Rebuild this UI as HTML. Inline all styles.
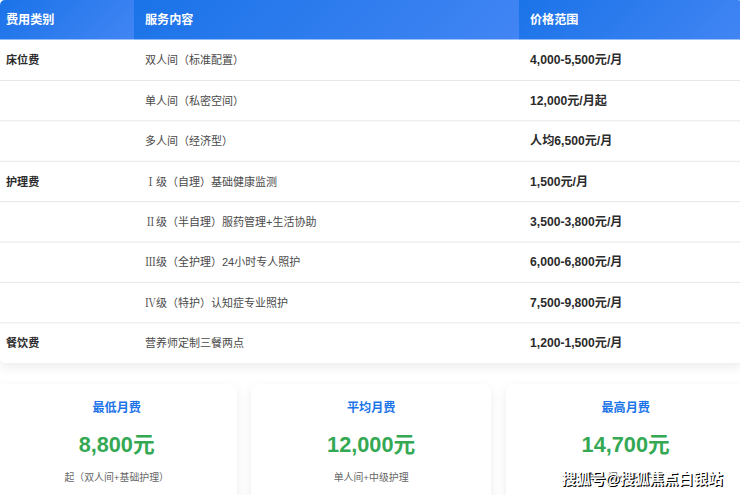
<!DOCTYPE html>
<html lang="zh-CN">
<head>
<meta charset="utf-8">
<title>费用明细</title>
<style>
html,body{margin:0;padding:0;}
body{width:740px;height:495px;overflow:hidden;position:relative;background:#fff;
 font-family:"Liberation Sans","Noto Sans CJK SC",sans-serif;color:#2b2b2b;}
.tbl{position:absolute;left:0;top:0;width:742.5px;height:363.2px;background:#fff;border-radius:5px;
 box-shadow:0 4px 12px rgba(0,0,0,.08);overflow:hidden;}
.th{position:absolute;top:0;height:40px;color:#fff;font-weight:bold;font-size:12.1px;
 background:linear-gradient(135deg,#1a73e8,#4285f4);box-sizing:border-box;white-space:nowrap;}
.th span{position:absolute;left:6px;top:1.2px;line-height:39.7px;}
.c1{left:0;width:134px;}
.c2{left:134px;width:385px;}
.c3{left:519px;width:223px;}
.th.c2 span,.th.c3 span{left:11px;}
svg.lines{position:absolute;left:0;top:0;width:742px;height:364px;}
.row{position:absolute;left:0;width:740px;height:40.4px;}
.row div{position:absolute;top:0;height:40.4px;line-height:40.4px;white-space:nowrap;}
.row .a{left:6px;font-weight:bold;font-size:11.1px;color:#2b2b2b;}
.row .b{left:145px;color:#4a4a4a;font-size:11px;}
.row .c{left:530px;font-weight:bold;font-size:12.15px;color:#2b2b2b;}
.rn{font-family:"Liberation Serif","Noto Serif CJK SC",serif;}
.card{position:absolute;top:383.5px;width:239.9px;height:130px;background:#fff;border-radius:8px;
 box-shadow:0 4px 12px rgba(0,0,0,.08);text-align:center;}
.card .t{position:absolute;left:0;right:0;top:16.5px;font-size:12.1px;font-weight:bold;color:#1a73e8;line-height:16px;}
.card .p{position:absolute;left:0;right:0;top:47px;font-size:21.7px;font-weight:bold;color:#34a853;line-height:28px;}
.card .s{position:absolute;left:0;right:0;top:87.3px;font-size:9.9px;color:#666;line-height:14px;}
.wm{position:absolute;left:561.4px;top:468.7px;font-size:14.7px;line-height:20px;color:#fff;white-space:nowrap;
 text-shadow:1px 1px 0 #000,1px 1px 0.6px rgba(0,0,0,.6);font-weight:bold;}
</style>
</head>
<body>
<div class="tbl">
<div class="th c1"><span>费用类别</span></div>
<div class="th c2"><span>服务内容</span></div>
<div class="th c3"><span>价格范围</span></div>
<svg class="lines" viewBox="0 0 742 364"><rect x="0" y="39.5" width="742" height="0.6" fill="#fff"/><rect x="0" y="79.95" width="742" height="1" fill="#e6e7ea"/><rect x="0" y="120.35" width="742" height="1" fill="#e6e7ea"/><rect x="0" y="160.75" width="742" height="1" fill="#e6e7ea"/><rect x="0" y="201.15" width="742" height="1" fill="#e6e7ea"/><rect x="0" y="241.55" width="742" height="1" fill="#e6e7ea"/><rect x="0" y="281.95" width="742" height="1" fill="#e6e7ea"/><rect x="0" y="322.35" width="742" height="1" fill="#e6e7ea"/></svg>
<div class="row" style="top:40.30px"><div class="a">床位费</div><div class="b">双人间（标准配置）</div><div class="c">4,000-5,500元/月</div></div>
<div class="row" style="top:80.70px"><div class="a"></div><div class="b">单人间（私密空间）</div><div class="c">12,000元/月起</div></div>
<div class="row" style="top:121.10px"><div class="a"></div><div class="b">多人间（经济型）</div><div class="c">人均6,500元/月</div></div>
<div class="row" style="top:161.50px"><div class="a">护理费</div><div class="b"><span class="rn">Ⅰ</span>级（自理）基础健康监测</div><div class="c">1,500元/月</div></div>
<div class="row" style="top:201.90px"><div class="a"></div><div class="b"><span class="rn">Ⅱ</span>级（半自理）服药管理+生活协助</div><div class="c">3,500-3,800元/月</div></div>
<div class="row" style="top:242.30px"><div class="a"></div><div class="b"><span class="rn">Ⅲ</span>级（全护理）24小时专人照护</div><div class="c">6,000-6,800元/月</div></div>
<div class="row" style="top:282.70px"><div class="a"></div><div class="b"><span class="rn">Ⅳ</span>级（特护）认知症专业照护</div><div class="c">7,500-9,800元/月</div></div>
<div class="row" style="top:323.10px"><div class="a">餐饮费</div><div class="b">营养师定制三餐两点</div><div class="c">1,200-1,500元/月</div></div>
</div>
<div class="card" style="left:-3.3px"><div class="t">最低月费</div><div class="p">8,800元</div><div class="s">起（双人间+基础护理）</div></div>
<div class="card" style="left:251.2px"><div class="t">平均月费</div><div class="p">12,000元</div><div class="s">单人间+中级护理</div></div>
<div class="card" style="left:505.7px"><div class="t">最高月费</div><div class="p">14,700元</div><div class="s">单人间+特级护理</div></div>
<div class="wm">搜狐号@搜狐焦点白银站</div>
</body>
</html>
